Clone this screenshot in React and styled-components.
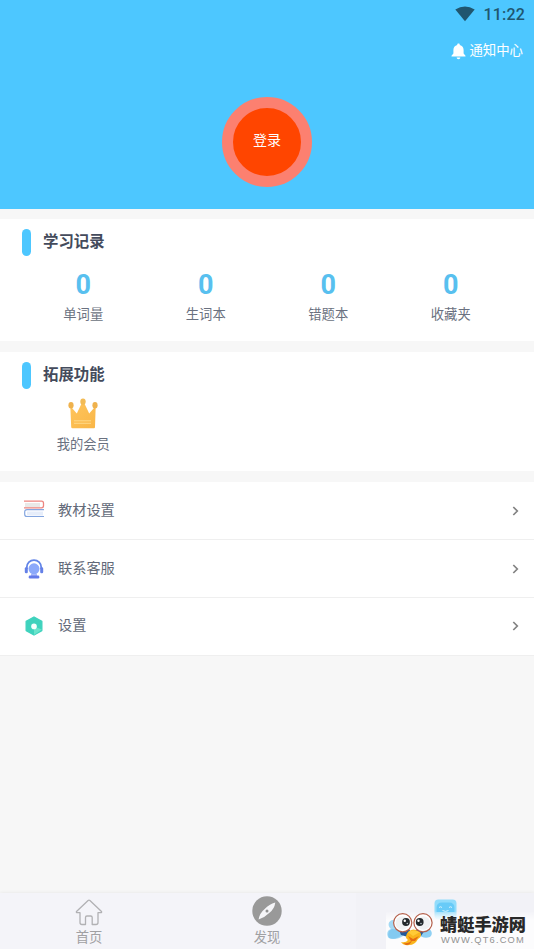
import styled, { createGlobalStyle } from 'styled-components'

const stats = ['单词量', '生词本', '错题本', '收藏夹']

const WifiIcon = () => (
  <svg width="20" height="16" viewBox="0 0 20 16">
    <path d="M0.3 3.6 Q10 -2.8 19.7 3.6 L10 15.3 Z" fill="#20566f" />
  </svg>
)

const BellIcon = () => (
  <svg width="15" height="17" viewBox="0 0 15 17" fill="#fff">
    <path d="M7.5 0.6c.8 0 1.3.5 1.3 1.3 2.4.6 3.8 2.4 3.8 5v3.6l1.900 2.200v.9H.5v-.9l1.900-2.200V6.900c0-2.600 1.400-4.400 3.800-5C6.200 1.100 6.700.600 7.500.600z" />
    <path d="M5.700 14.500h3.600c0 1-.800 1.700-1.800 1.700s-1.800-.700-1.800-1.700z" />
  </svg>
)

const CrownIcon = () => (
  <svg width="30" height="31" viewBox="0 0 30 31">
    <defs>
      <linearGradient id="crown" x1="0" y1="0" x2="1" y2="1">
        <stop offset="0" stopColor="#ffc55c" />
        <stop offset="1" stopColor="#f9b647" />
      </linearGradient>
    </defs>
    <path
      d="M2.300 8 L8.800 15.500 L13.800 5 L16.200 5 L21.200 15.500 L27.700 8 L27 29 Q27 30.200 26 30.200 L4.400 30.200 Q3.300 30.200 3.200 29 Z"
      fill="url(#crown)"
    />
    <ellipse cx="15" cy="3.600" rx="2.700" ry="3.200" fill="#f2bb55" />
    <ellipse cx="3" cy="7.200" rx="2.600" ry="3.200" fill="#efb24d" />
    <ellipse cx="27" cy="7.200" rx="2.600" ry="3.200" fill="#efb24d" />
    <path d="M6 22.800h17M6 25.300h17" stroke="#ffdc8f" strokeWidth="0.900" />
  </svg>
)

const BooksIcon = () => (
  <svg width="22" height="22" viewBox="0 0 22 22" fill="none">
    <path d="M2 3h15v4.500H2z" fill="#e9e9e7" />
    <path d="M4 11.500h16v4H4z" fill="#e6edfa" />
    <path d="M1 1.200h17.500q2 0 2 2v2.600q0 2-2 2H1" stroke="#ed8580" strokeWidth="1.300" />
    <path d="M21 9.700H4q-2.300 0-2.300 2.300v2.200q0 2.300 2.300 2.300h17" stroke="#83a5df" strokeWidth="1.200" />
  </svg>
)

const ServiceIcon = () => (
  <svg width="20" height="20" viewBox="0 0 20 20" fill="none">
    <path d="M2.800 10V8.300a7.200 7.200 0 0 1 14.400 0V10" stroke="#6285e8" strokeWidth="1.800" />
    <rect x="0.800" y="8.200" width="3" height="6" rx="1.300" fill="#6480e7" />
    <rect x="16.200" y="8.200" width="3" height="6" rx="1.300" fill="#6480e7" />
    <circle cx="10" cy="9.800" r="5.500" fill="#8ca9fa" />
    <path d="M7 15h6v2H7z" fill="#a8b9fa" />
    <rect x="4.700" y="16.500" width="10.600" height="3" rx="1.200" fill="#647be9" />
  </svg>
)

const SettingsIcon = () => (
  <svg width="18" height="20" viewBox="0 0 18 20">
    <path d="M9 1 L16.800 5.400 V14.600 L9 19 L1.200 14.600 V5.400 Z" fill="#3fd2bd" stroke="#3fd2bd" strokeWidth="1.400" strokeLinejoin="round" />
    <path d="M9 10.500 L16.900 13.500 L9 19 Z" fill="#69e4cb" />
    <circle cx="9" cy="10.400" r="2.800" fill="#f7fffd" />
  </svg>
)

const ArrowIcon = () => (
  <svg width="7" height="10" viewBox="0 0 7 10" fill="none">
    <path d="M1.300 1l4 4-4 4" stroke="#828282" strokeWidth="1.700" />
  </svg>
)

const HomeIcon = () => (
  <svg width="28" height="27" viewBox="0 0 28 27" fill="none">
    <path
      d="M13.100 1.500 L1.500 12.500 Q1 13.700 2.300 13.700 H5 V23.500 Q5 25.500 7 25.500 H10.500 V18.500 Q10.500 17 12 17 H15.700 Q17.200 17 17.200 18.500 V25.500 H21 Q23 25.500 23 23.500 V13.700 H25.700 Q27 13.700 26.500 12.500 L14.900 1.500 Q14 .700 13.100 1.500 Z"
      stroke="#b1b1b4"
      strokeWidth="1.300"
      strokeLinejoin="round"
    />
  </svg>
)

const CompassIcon = () => (
  <svg width="30" height="30" viewBox="0 0 30 30">
    <circle cx="15" cy="15" r="14.700" fill="#999" />
    <path d="M23.300 6.500 Q22.500 13 17.200 17 Q12.600 21.500 6.600 23.600 Q7.500 17 12.700 12.900 Q17.200 8.200 23.300 6.500 Z" fill="#f5f5f8" />
    <circle cx="15" cy="15" r="1.500" fill="#929292" />
  </svg>
)

const ProfileIcon = () => (
  <svg width="23" height="24" viewBox="0 0 23 24" fill="none">
    <defs>
      <linearGradient id="profile" x1="0" y1="0" x2="0" y2="1">
        <stop offset="0.550" stopColor="#92dcfb" />
        <stop offset="1" stopColor="#d9f1fb" />
      </linearGradient>
    </defs>
    <rect x="0.500" y="0.500" width="22" height="20" rx="4" fill="url(#profile)" />
    <path d="M2.500 9 Q2.500 3.500 8 3.500 H15 Q20.500 3.500 20.500 9 V13 H2.500Z" fill="#68cbf8" />
    <path d="M5 8.500q1.500-1.500 3 0M15 8.500q1.500-1.500 3 0M8.500 11.500q3 1.800 6 0" stroke="#d5f3ff" strokeWidth="1" />
  </svg>
)

const Dragonfly = () => (
  <svg width="46" height="34" viewBox="0 0 46 34">
    <path d="M7 8C1 8 0 14 4 17 0 18-1 23 2 26c4 2 10 1 14-2V12z" fill="#a3d9f5" />
    <path d="M5 17c5 0 8 2 11 5-4 4-10 6-14 4-2-4 0-8 3-9z" fill="#83caf1" />
    <path d="M37 16c7 0 10 5 6 9-5 2-9 0-12-3z" fill="#8fd0f3" />
    <path d="M12 18h11l-2 7-7-2zM28 18h10l-4 6-6 1z" fill="#24599a" />
    <path d="M21 20Q26 15 33 20Q36 24 31 27Q28 33 22 33Q17 34 14 30Q19 31 21 28Q17 25 21 20Z" fill="#f9b51c" />
    <path d="M21 24l5 3 6-3-4 5-4 0z" fill="#e66c12" />
    <path d="M21 20q5-3 12 0l-7 4z" fill="#ffcb36" />
    <path d="M16 31q6 1 9-3-1 5-6 5z" fill="#e36b16" />
    <circle cx="15.700" cy="10.800" r="9.100" fill="#fff" stroke="#b4604b" strokeWidth="1.200" />
    <circle cx="36" cy="10.800" r="9.100" fill="#fff" stroke="#b4604b" strokeWidth="1.200" />
    <circle cx="15.200" cy="11" r="6.700" fill="#f0f2f3" />
    <circle cx="36.500" cy="11" r="6.700" fill="#f0f2f3" />
    <circle cx="19" cy="10" r="3.900" fill="#23292c" />
    <circle cx="32.700" cy="10" r="3.900" fill="#23292c" />
    <circle cx="17.800" cy="8.700" r="1.200" fill="#fff" />
    <circle cx="31.500" cy="8.700" r="1.200" fill="#fff" />
    <circle cx="20.300" cy="11.500" r="0.800" fill="#b9c4c8" />
    <circle cx="34" cy="11.500" r="0.800" fill="#b9c4c8" />
  </svg>
)

const menu = [
  { label: '教材设置', icon: <BooksIcon /> },
  { label: '联系客服', icon: <ServiceIcon /> },
  { label: '设置', icon: <SettingsIcon /> }
]

const App = () => (
  <>
    <GlobalStyle />
    <Screen>
      <Header>
        <StatusBar>
          <WifiIcon />
          <Clock>11:22</Clock>
        </StatusBar>
        <Notice>
          <BellIcon />
          通知中心
        </Notice>
        <LoginButton>登录</LoginButton>
      </Header>

      <Panel $height={122}>
        <PanelTitle>学习记录</PanelTitle>
        <Grid>
          {stats.map(label => (
            <Cell key={label}>
              <Count>0</Count>
              <Label>{label}</Label>
            </Cell>
          ))}
        </Grid>
      </Panel>

      <Panel $height={119}>
        <PanelTitle>拓展功能</PanelTitle>
        <Grid>
          <Cell>
            <CrownBox><CrownIcon /></CrownBox>
            <Label>我的会员</Label>
          </Cell>
        </Grid>
      </Panel>

      <Menu>
        {menu.map(({ label, icon }) => (
          <MenuRow key={label}>
            <MenuIcon>{icon}</MenuIcon>
            <MenuLabel>{label}</MenuLabel>
            <ArrowIcon />
          </MenuRow>
        ))}
      </Menu>

      <TabBar>
        <Tab>
          <HomeIcon />
          首页
        </Tab>
        <Tab>
          <CompassIcon />
          发现
        </Tab>
        <Tab $active>
          <ProfileIcon />
        </Tab>
        <Watermark>
          <Dragonfly />
          <Brand>
            <BrandName>蜻蜓手游网</BrandName>
            <BrandUrl>WWW.QT6.COM</BrandUrl>
          </Brand>
        </Watermark>
      </TabBar>
    </Screen>
  </>
)

const GlobalStyle = createGlobalStyle`
  * {
    box-sizing: border-box;
  }

  body {
    margin: 0;
    background: #f7f7f7;
    font-family: Roboto, 'Noto Sans CJK SC', sans-serif;
  }

  svg {
    display: block;
    flex: none;
  }
`

const Screen = styled.div`
  display: flex;
  flex-direction: column;
  width: 534px;
  height: 949px;
  overflow: hidden;
  background: #f7f7f7;
`

const Header = styled.header`
  display: flex;
  flex-direction: column;
  flex: none;
  height: 209px;
  margin-bottom: 10px;
  background: #4dc7ff;
`

const StatusBar = styled.div`
  display: flex;
  justify-content: flex-end;
  align-items: center;
  gap: 8px;
  height: 28px;
  padding: 0 9px 1px 0;
`

const Clock = styled.span`
  padding-top: 2px;
  font-size: 16px;
  font-weight: 500;
  line-height: 20px;
  letter-spacing: 0.2px;
  color: #20566f;
`

const Notice = styled.div`
  display: flex;
  justify-content: flex-end;
  align-items: center;
  gap: 3px;
  height: 42px;
  padding: 0 11px 0 0;
  font-size: 13.4px;
  color: #fff;

  svg {
    margin-top: 5px;
  }
`

const LoginButton = styled.button`
  align-self: center;
  width: 90px;
  height: 90px;
  margin-top: 27px;
  padding: 0 0 6px;
  border: 11px solid #fc8070;
  border-radius: 50%;
  background: #ff4500;
  font-family: inherit;
  font-size: 14px;
  color: #fff;
`

const Panel = styled.section`
  flex: none;
  height: ${p => p.$height}px;
  margin-bottom: 11px;
  padding: 10px 22px 0;
  background: #fff;
`

const PanelTitle = styled.h2`
  display: flex;
  align-items: center;
  gap: 12px;
  height: 27px;
  margin: 0;
  padding-bottom: 2px;
  font-size: 15.400px;
  font-weight: 700;
  line-height: 24px;
  color: #444b5c;

  &:before {
    content: '';
    width: 9px;
    height: 27px;
    margin-bottom: -2px;
    border-radius: 5px;
    background: #4dc7ff;
  }
`

const Grid = styled.div`
  display: grid;
  grid-template-columns: repeat(4, 1fr);
`

const Cell = styled.div`
  display: flex;
  flex-direction: column;
  align-items: center;
`

const Count = styled.div`
  height: 49px;
  padding-top: 13px;
  font-size: 27px;
  font-weight: 700;
  line-height: 32px;
  color: #58c0ef;
`

const CrownBox = styled.div`
  height: 46px;
  padding-top: 9px;
`

const Label = styled.div`
  font-size: 13.300px;
  line-height: 20px;
  color: #6a7180;
`

const Menu = styled.nav`
  flex: none;
`

const MenuRow = styled.div`
  display: flex;
  align-items: center;
  height: 58px;
  padding: 1px 15px 0 23px;
  border-bottom: 1px solid #efefef;
  background: #fff;

  &:last-child {
    padding-top: 0;
    padding-bottom: 1px;
  }
`

const MenuIcon = styled.span`
  display: flex;
  justify-content: center;
  width: 22px;
  margin-right: 1px;
`

const MenuLabel = styled.span`
  flex: 1;
  padding: 0 0 2px 12px;
  font-size: 14.200px;
  line-height: 20px;
  color: #626978;
`

const TabBar = styled.footer`
  position: relative;
  display: flex;
  flex: none;
  height: 56px;
  margin-top: auto;
  background: #f4f4f9;
  box-shadow: 0 -1px 3px rgba(0, 0, 0, 0.05);
`

const Tab = styled.div`
  display: flex;
  flex: 1;
  flex-direction: column;
  align-items: center;
  justify-content: ${p => (p.$active ? 'flex-start' : 'flex-end')};
  padding-top: ${p => (p.$active ? '6px' : 0)};
  background: ${p => (p.$active ? '#f2f2f7' : 'transparent')};
  font-size: 13.300px;
  line-height: 23px;
  color: #a0a0a3;
`

const Watermark = styled.div`
  position: absolute;
  right: 0;
  bottom: 0;
  display: flex;
  gap: 7px;
  width: 148px;
  height: 37px;
  padding-left: 1px;
  background: linear-gradient(to bottom, rgba(255, 255, 255, 0.1), rgba(255, 255, 255, 0.8) 24%);
`

const Brand = styled.div`
  display: flex;
  flex-direction: column;
`

const BrandName = styled.div`
  height: 22px;
  font-size: 17.200px;
  font-weight: 900;
  line-height: 26px;
  color: #292929;
  white-space: nowrap;
`

const BrandUrl = styled.div`
  padding-left: 1px;
  font-family: 'Liberation Sans', sans-serif;
  font-size: 9.300px;
  line-height: 12px;
  letter-spacing: 1.200px;
  color: #929292;
`

export default App
